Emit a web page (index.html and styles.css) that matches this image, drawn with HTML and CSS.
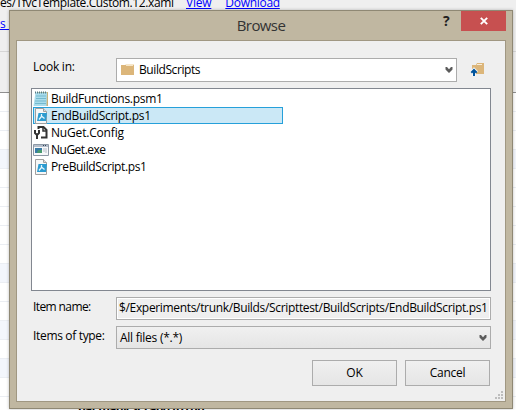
FILE: index.html
```html
<!DOCTYPE html>
<html lang="en">
<head>
<meta charset="utf-8">
<title>Browse</title>
<link rel="stylesheet" href="styles.css">
</head>
<body>
<svg class="defs" width="0" height="0">
  <symbol id="ps" viewBox="0 0 16 16">
    <path d="M2.500.5h8l3 3v12h-11z" fill="#f7f7f7" stroke="#a0a0a0"/>
    <path d="M10.500.5v3h3" fill="#ddd" stroke="#a0a0a0"/>
    <path d="M5.500 5h8.500l-1 8H4z" fill="#2b9bd0"/>
    <path d="M8.500 6v2.500L6 11.500M9 8.500l2.500 2" fill="none" stroke="#e8f7fd" stroke-width="1.300"/>
  </symbol>
  <symbol id="folder" viewBox="0 0 14 12">
    <path d="M0 1h4l1-1h8v3h-13z" fill="#f6e6c9"/>
    <path d="M0 1h5v1h7v-1h1v10H0z" fill="#dcb67a"/>
  </symbol>
  <symbol id="chevron" viewBox="0 0 8 6">
    <path d="M.5 0h1.500l2 2.200L6 0h1.500v2.500L4 6 .5 2.500z" fill="#5c5c5c"/>
  </symbol>
</svg>
<div class="page">
  <div class="page-top">
    <p class="template"><span>es/TfvcTemplate.Custom.12.xaml</span><a>View</a><a class="download">Download</a></p>
    <p class="side-link"><a>s f</a></p>
    <hr>
  </div>
  <div class="stripes">
    <i></i><i></i><i></i><i class="alt"></i><i></i><i></i><i></i><i></i><i></i><i class="alt"></i><i></i><i></i><i class="alt"></i><i></i><i class="alt"></i><i></i><i class="foot"><b>hat many SCI and to run.</b></i>
  </div>
</div>
<section class="dialog">
  <header>
    <h1>Browse</h1>
    <div class="controls"><b>?</b><button class="close"><svg width="8" height="8"><path d="M.8.8l6.400 6.400M7.200.8L.8 7.200" stroke="#fff" stroke-width="1.900"/></svg></button></div>
  </header>
  <main>
    <div class="row look">
      <label><span class="t-look">Look in:</span></label>
      <div class="combo"><svg width="14" height="12"><use href="#folder"/></svg><span class="t-folder">BuildScripts</span><svg class="chev" width="8" height="6"><use href="#chevron"/></svg></div>
      <svg class="up" width="16" height="16"><path d="M2 3h4l1-2h7v11H5V7H2z" fill="#dcb67a"/><path d="M7 2h5v1H7z" fill="#f8edda"/><path d="M4 14V8M1.300 10.700L4 8l2.700 2.700" fill="none" stroke="#f8f8f8" stroke-width="4"/><path d="M4 14V8M1.300 10.700L4 8l2.700 2.700" fill="none" stroke="#00539c" stroke-width="2"/></svg>
    </div>
    <ul class="files">
      <li><svg width="16" height="16"><path d="M4 1h11v14H4z" fill="#c8b27a"/><path d="M2.500 1.500h11.500l-.5 13.500H.5z" fill="#a9dcec"/><path d="M3 5h10M3 7.500h10M2 10h11M2 12.500h11" stroke="#74b9cd"/><path d="M2 1.500h12" stroke="#557c86" stroke-width="2" stroke-dasharray="1 1"/></svg><span class="t-f1">BuildFunctions.psm1</span></li>
      <li class="selected"><svg width="16" height="16"><use href="#ps"/></svg><span class="t-f2">EndBuildScript.ps1</span></li>
      <li><svg width="16" height="16"><path d="M5.500 4V2h5l3 3v7.500H8" fill="#fff" stroke="#333" stroke-width="2"/><path d="M10 2v4h4" fill="none" stroke="#333" stroke-width="1.500"/><path d="M2 5v3l1.500 1.500h1L6 8V5M4 9v5" fill="none" stroke="#333" stroke-width="2"/></svg><span class="t-f3">NuGet.Config</span></li>
      <li><svg width="16" height="16"><path d="M.5 2.500h15v11H.5z" fill="#f7f8fa" stroke="#8d98a5"/><path d="M1 3h14v2H1z" fill="#b5becb"/><path d="M2 6h7v5H2z" fill="#397aa5"/><path d="M5 8h4v3H4z" fill="#489b6f"/><path d="M10 7h2M10 9h2M13 6v5" stroke="#b5bdc7"/><path d="M10 3.500h4" stroke="#35465a" stroke-dasharray="1 1"/></svg><span class="t-f4">NuGet.exe</span></li>
      <li><svg width="16" height="16"><use href="#ps"/></svg><span class="t-f5">PreBuildScript.ps1</span></li>
    </ul>
    <div class="row name">
      <label><span class="t-name">Item name:</span></label>
      <div class="field"><span class="t-path">$/Experiments/trunk/Builds/Scripttest/BuildScripts/EndBuildScript.ps1</span></div>
    </div>
    <div class="row type">
      <label><span class="t-type">Items of type:</span></label>
      <div class="select"><span class="t-all">All files (*.*)</span><svg class="chev" width="8" height="6"><use href="#chevron"/></svg></div>
    </div>
    <div class="buttons"><button><span class="t-ok">OK</span></button><button><span class="t-cancel">Cancel</span></button></div>
    <svg class="grip" width="8" height="8"><path d="M6 0h2v2H6zM3 3h2v2H3zM6 3h2v2H6zM0 6h2v2H0zM3 6h2v2H3zM6 6h2v2H6z" fill="#bdbdbd"/></svg>
  </main>
</section>
</body>
</html>
```
FILE: styles.css
```css
* { box-sizing: border-box; }
body, p, h1, ul, hr { margin: 0; padding: 0; }
body { position: relative; width: 516px; height: 410px; overflow: hidden; background: #fff; color: #000; font: 12px/16px "Open Sans", "Noto Sans", sans-serif; }
.defs { position: absolute; }
button { font: inherit; padding: 0; }
svg { display: block; flex: none; }
span { white-space: nowrap; }

.page { height: 410px; overflow: hidden; }
.page-top { height: 93px; background: #efefef; border-bottom: 1px solid #909090; overflow: hidden; }
.page-top a { color: #00f; text-decoration: underline; }
.template { display: flex; height: 16px; margin-top: -5px; white-space: nowrap; letter-spacing: -.22px; }
.template span { width: 186px; letter-spacing: -.39px; }
.template .download { margin-left: 14px; letter-spacing: -.3px; }
.side-link { height: 40px; padding-top: 5px; }
.page-top hr { border: 0; border-top: 1px solid #d6d6d6; }
.stripes i { display: block; height: 19px; border-bottom: 1px solid #ebeef3; background: #fff; }
.stripes .alt { background: #f3f6fc; }
.stripes .foot { border: 0; padding-left: 78px; font-style: normal; line-height: 24px; letter-spacing: -.8px; }

.dialog { position: absolute; left: 9px; top: 10px; width: 504px; height: 399px; padding: 0 6px 6px; border: 1px solid #8f8874; background: #c0b7a1; box-shadow: 0 0 3px rgba(0,0,0,.25); }
header { display: grid; height: 29px; grid-template-columns: 1fr; }
h1 { grid-area: 1 / 1; text-align: center; font-size: 15px; font-weight: 400; line-height: 29px; letter-spacing: -.6px; color: #333; }
.controls { grid-area: 1 / 1; justify-self: end; display: flex; }
.controls b { width: 18px; font-size: 14px; line-height: 20px; color: #222; }
.close { display: flex; width: 45px; height: 20px; border: 0; background: #c75050; align-items: center; justify-content: center; }
main { display: flex; flex-direction: column; height: 362px; padding: 17px 14px 0; border: 1px solid #a09782; background: #efefef; }
.row { display: flex; }
.row label { width: 85px; padding-left: 2px; }
.combo, .select, .field { display: flex; align-items: center; border: 1px solid #acacac; }
.combo { width: 341px; height: 24px; padding: 0 3px 0 4px; background: #fff; }
.combo span { margin-left: 4px; }
.chev { margin-left: auto; }
.up { margin: 4px 0 0 13px; }
.look label { padding-top: 1px; }
.files { height: 203px; margin-top: 6px; padding: 1px; border: 1px solid #828790; background: #fff; list-style: none; }
.files li { display: flex; width: 250px; height: 17px; border: 1px solid transparent; align-items: center; }
.files li svg { margin-left: -1px; }
.files li span { margin-left: 2px; }
.files .selected { border-color: #26a0da; background: #cbe8f6; }
.name { margin-top: 6px; }
.field, .select { width: 375px; height: 23px; }
.field { padding-left: 2px; box-shadow: inset 0 0 0 1px #fff; }
.field span { padding-bottom: 2px; }
.name label, .type label { padding-top: 2px; }
.type { margin-top: 6px; }
.select { padding: 0 3px; background: linear-gradient(#f0f0f0, #e5e5e5); }
.buttons { display: flex; justify-content: flex-end; gap: 8px; margin: 11px 1px 0 0; }
.buttons button { width: 85px; height: 26px; border: 1px solid #acacac; background: linear-gradient(#f0f0f0, #e5e5e5); }
.grip { align-self: flex-end; margin: 5px -12px 0 0; }

.t-look { letter-spacing: -.25px; }
.t-folder { letter-spacing: -.42px; }
.t-f1 { letter-spacing: -.28px; }
.t-f2 { letter-spacing: -.28px; }
.t-f3 { letter-spacing: -.18px; }
.t-f4 { letter-spacing: -.5px; }
.t-f5 { letter-spacing: -.38px; }
.t-name { letter-spacing: -.6px; }
.t-type { letter-spacing: -.33px; }
.t-path { letter-spacing: -.335px; }
.t-all { letter-spacing: -.25px; }
.t-cancel { letter-spacing: -.25px; }
```
